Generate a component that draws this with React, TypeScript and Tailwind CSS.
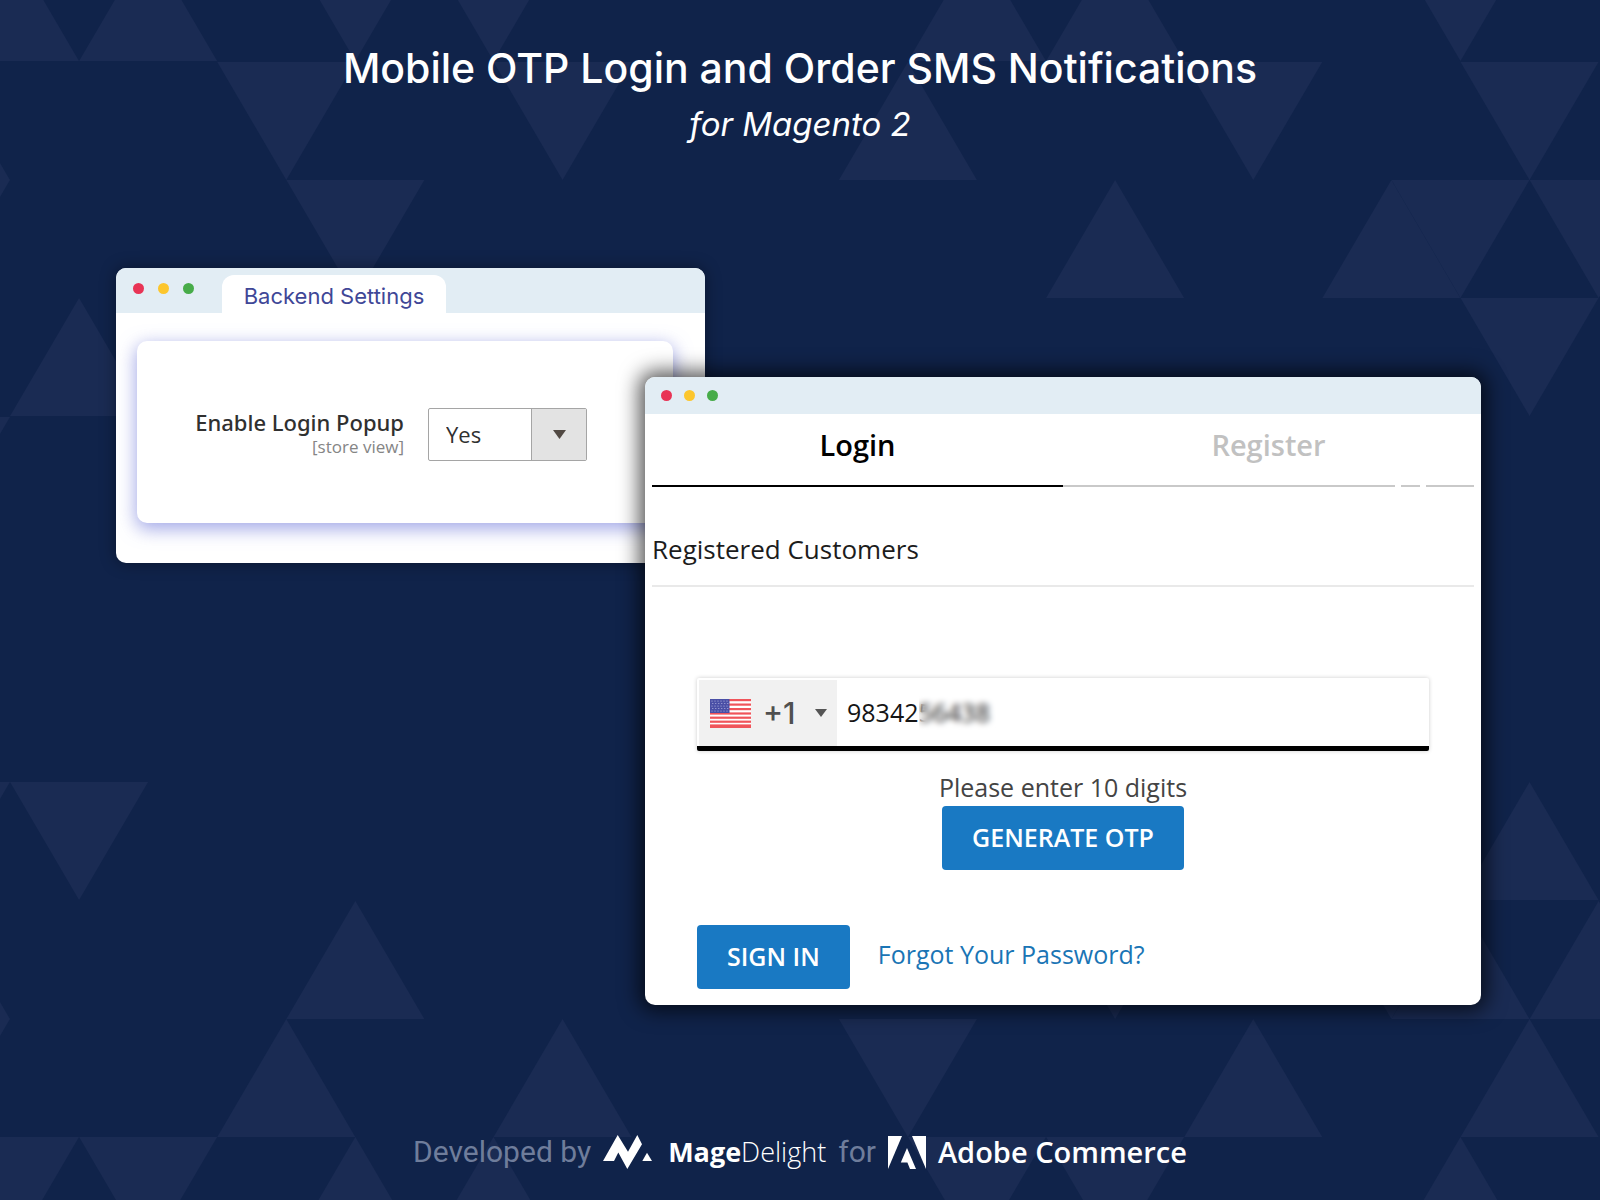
import { useState } from 'react';
import clsx from 'clsx';

type Triangle = [column: number, top: number, direction: 'up' | 'down'];

// 배경 삼각형 패턴 (열, 시작 y, 방향)
const TRIANGLES: Triangle[] = [
  [0, -57, 'up'], [2, -57, 'up'], [5, -57, 'down'], [7, -57, 'down'],
  [14, -57, 'up'], [16, -57, 'up'], [21, -57, 'down'],
  [-1, 62, 'up'], [4, 62, 'down'], [8, 62, 'down'], [13, 62, 'up'], [18, 62, 'down'], [22, 62, 'down'],
  [-1, 180, 'down'], [5, 180, 'down'], [16, 180, 'up'], [20, 180, 'up'], [21, 180, 'down'], [23, 180, 'down'],
  [1, 298, 'up'], [22, 298, 'down'],
  [-1, 417, 'down'],
  [-1, 782, 'down'], [1, 782, 'down'], [22, 782, 'up'],
  [-1, 901, 'up'], [5, 901, 'up'], [16, 901, 'down'], [20, 901, 'down'], [21, 901, 'up'], [23, 901, 'up'],
  [-1, 1019, 'down'], [4, 1019, 'up'], [8, 1019, 'up'], [13, 1019, 'down'], [18, 1019, 'up'], [22, 1019, 'up'],
  [0, 1137, 'down'], [2, 1137, 'down'], [5, 1137, 'up'], [7, 1137, 'up'],
  [14, 1137, 'down'], [16, 1137, 'down'], [21, 1137, 'up'],
];

function trianglePoints([column, top, direction]: Triangle) {
  const x = 10 + column * 69.07;
  const apex = direction === 'up' ? top : top + 118;
  const base = direction === 'up' ? top + 118 : top;
  return `${x},${apex} ${x - 69},${base} ${x + 69},${base}`;
}

function Backdrop() {
  return (
    <svg
      aria-hidden="true"
      className="absolute inset-0 w-full h-full"
      viewBox="0 0 1600 1200"
      preserveAspectRatio="xMidYMid slice"
    >
      {TRIANGLES.map((t) => (
        <polygon key={t.join()} points={trianglePoints(t)} fill="#1a2b53" />
      ))}
    </svg>
  );
}

function WindowDots({ className }: { className?: string }) {
  return (
    <div className={clsx('flex', className)}>
      <span className="size-[11px] rounded-full bg-[#e83455]" />
      <span className="size-[11px] rounded-full bg-[#fcc62d]" />
      <span className="size-[11px] rounded-full bg-[#47ac49]" />
    </div>
  );
}

function UsFlag() {
  return (
    <svg width="41" height="29" viewBox="0 0 41 29" aria-hidden="true">
      <rect width="41" height="29" fill="#fff" />
      {[0, 4.5, 9, 13.4, 17.6, 21.6].map((y) => (
        <rect key={y} y={y} width="41" height="2.2" fill="#f0545a" />
      ))}
      <rect y="25.4" width="41" height="3.6" fill="#f0545a" />
      <rect width="19.5" height="14" fill="#4a4fa6" />
      {[2, 4.5, 7, 9.5, 12].map((y, row) =>
        [2, 5, 8, 11, 14, 17].map((x) => (
          <circle key={`${x}-${y}`} cx={x + (row % 2) * 0.8} cy={y} r="0.6" fill="#b9bbe4" />
        ))
      )}
    </svg>
  );
}

function MageDelightMark() {
  return (
    <svg width="49" height="34" viewBox="0 0 49 34" fill="#fff" aria-hidden="true">
      <path d="M0 26 L14.7 0 L25 16.7 L34.3 0 L39 9.3 L24.3 34 L15.3 17.5 L11 26 Z" />
      <path d="M44 17.7 L49 26 H39.3 Z" />
    </svg>
  );
}

function AdobeMark() {
  return (
    <svg width="38" height="33" viewBox="0 0 38 33" fill="#fff" aria-hidden="true">
      <path d="M0 0 H14 L0 33 Z" />
      <path d="M24 0 H38 V33 Z" />
      <path d="M19 12 L28 33 H22 L19.4 26.4 H12.8 Z" />
    </svg>
  );
}

function BackendWindow() {
  const [enabled, setEnabled] = useState('Yes');

  return (
    <section className="flex-[589] min-w-0 rounded-[10px] bg-white shadow-[0_0_16px_rgba(0,0,0,0.4)]">
      <header className="flex items-end h-[45px] pl-[17px] rounded-t-[10px] bg-[#e2edf4]">
        <WindowDots className="gap-3.5 self-start mt-[15px]" />
        <h2 className="ml-7 w-56 h-[38px] rounded-t-[12px] bg-white text-center text-[22px] leading-[42px] font-[Inter,sans-serif] text-[#3f4797]">
          Backend Settings
        </h2>
      </header>

      <div className="mt-7 mb-10 ml-[21px] mr-8 h-[182px] pt-[65px] pl-[54px] flex items-start gap-6 rounded-[10px] bg-white shadow-[0_5px_18px_1px_rgba(100,110,215,0.6)]">
        <label htmlFor="login-popup" className="w-[213px] flex flex-col text-right whitespace-nowrap">
          <span className="text-[22px] leading-8 font-medium font-['Noto_Sans',sans-serif] text-[#303030]">Enable Login Popup</span>
          <span className="text-[17px] leading-[18px] text-[#858585]">[store view]</span>
        </label>
        <div className="relative mt-0.5">
          <select
            id="login-popup"
            value={enabled}
            onChange={(e) => setEnabled(e.target.value)}
            className="appearance-none w-[159px] h-[53px] pl-[17px] border border-[#a5a5a5] rounded-[2px] bg-white text-[22px] text-[#303030]"
          >
            <option>Yes</option>
            <option>No</option>
          </select>
          <span className="pointer-events-none absolute inset-y-px right-px w-[55px] flex items-center justify-center border-l border-[#a5a5a5] bg-[#e3e3e3]">
            <svg width="13" height="9" viewBox="0 0 13 9" aria-hidden="true">
              <path d="M0 0 H13 L6.5 9 Z" fill="#514943" />
            </svg>
          </span>
        </div>
      </div>
    </section>
  );
}

function LoginWindow() {
  const [tab, setTab] = useState('login');
  const [phone, setPhone] = useState('9834256438');

  const tabClass = (name: string) =>
    clsx(
      'pb-[9px] border-b-2 text-[29px] leading-[62px] font-semibold',
      tab === name ? 'border-black text-black' : 'border-[#c9c9c9] text-[#c1c1c1]'
    );

  return (
    <section className="relative flex-[836] min-w-0 mt-[109px] -ml-[60px] rounded-[10px] bg-white shadow-[0_0_20px_6px_rgba(0,0,0,0.65)]">
      <header className="h-[37px] pl-4 flex items-center rounded-t-[10px] bg-[#e2edf4]">
        <WindowDots className="gap-3" />
      </header>

      <div className="px-[7px] pb-4">
        <div role="tablist" className="relative grid grid-cols-2">
          <button role="tab" aria-selected={tab === 'login'} onClick={() => setTab('login')} className={tabClass('login')}>
            Login
          </button>
          <button role="tab" aria-selected={tab === 'register'} onClick={() => setTab('register')} className={tabClass('register')}>
            Register
          </button>
          <span className="absolute bottom-0 right-[73px] w-1.5 h-0.5 bg-white" />
          <span className="absolute bottom-0 right-12 w-1.5 h-0.5 bg-white" />
        </div>

        <h2 className="mt-11 pb-[18px] border-b-2 border-[#e9e9e9] text-[26px] leading-9 text-[#1c1c1c]">
          Registered Customers
        </h2>

        <form className="mt-[91px] mx-[45px]" onSubmit={(e) => e.preventDefault()}>
          <div className="relative flex h-[73px] p-0.5 pb-0 border-b-[5px] border-black rounded-[2px] bg-white shadow-[0_0_4px_rgba(0,0,0,0.2)]">
            <button type="button" aria-label="Country code" className="w-[138px] pl-[11px] flex items-center bg-[#f1f1f1]">
              <UsFlag />
              <span className="ml-3 w-9 text-left text-[30px] leading-9 font-medium font-[Inter,sans-serif] text-[#505050]">+1</span>
              <svg className="ml-4" width="12" height="8" viewBox="0 0 12 8" aria-hidden="true">
                <path d="M0 0 H12 L6 8 Z" fill="#555" />
              </svg>
            </button>
            <input
              type="tel"
              aria-label="Phone number"
              value={phone}
              onChange={(e) => setPhone(e.target.value)}
              className="flex-1 min-w-0 pl-2.5 text-[25px] text-[#151515] outline-none"
            />
            <span className="pointer-events-none absolute top-3 bottom-3 left-[222px] w-20 backdrop-blur-[3px]" />
          </div>

          <div className="flex flex-col items-center mt-[17px]">
            <p className="text-[25px] leading-[38px] text-[#444]">Please enter 10 digits</p>
            <button type="button" className="h-16 px-[30px] rounded-[4px] bg-[#1979c3] text-[25px] font-semibold text-white">
              GENERATE OTP
            </button>
          </div>

          <div className="flex items-center gap-7 mt-[55px]">
            <button type="submit" className="h-16 px-[30px] rounded-[4px] bg-[#1979c3] text-[25px] font-semibold text-white">
              SIGN IN
            </button>
            <a href="#forgot" className="pb-1 text-[25px] text-[#1a75b5]">Forgot Your Password?</a>
          </div>
        </form>
      </div>
    </section>
  );
}

export default function App() {
  return (
    <main className="relative min-h-screen flex flex-col overflow-hidden bg-[#10234a] font-['Open_Sans','Noto_Sans',sans-serif]">
      <Backdrop />

      <header className="relative pt-[38px] text-center text-white font-[Inter,sans-serif]">
        <h1 className="text-[41px] leading-[60px] font-medium">Mobile OTP Login and Order SMS Notifications</h1>
        <p className="mt-0.5 text-[33px] leading-[48px] italic">for Magento 2</p>
      </header>

      <div className="relative flex items-start mt-30 pl-[116px] pr-[119px]">
        <BackendWindow />
        <LoginWindow />
      </div>

      <footer className="relative mt-auto pt-10 pb-6 flex items-center justify-center text-white">
        <span className="text-[30px] leading-[48px] font-['Roboto',sans-serif] text-[#6f7d9b]">Developed by</span>
        <span className="flex items-center gap-4 ml-3">
          <MageDelightMark />
          <span className="text-[27px]">
            <b className="font-bold">Mage</b>
            <span className="font-light">Delight</span>
          </span>
        </span>
        <span className="mx-3 text-[30px] leading-[48px] font-['Roboto',sans-serif] text-[#6f7d9b]">for</span>
        <span className="flex items-center gap-3">
          <AdobeMark />
          <span className="text-[29px] font-semibold">Adobe Commerce</span>
        </span>
      </footer>
    </main>
  );
}
